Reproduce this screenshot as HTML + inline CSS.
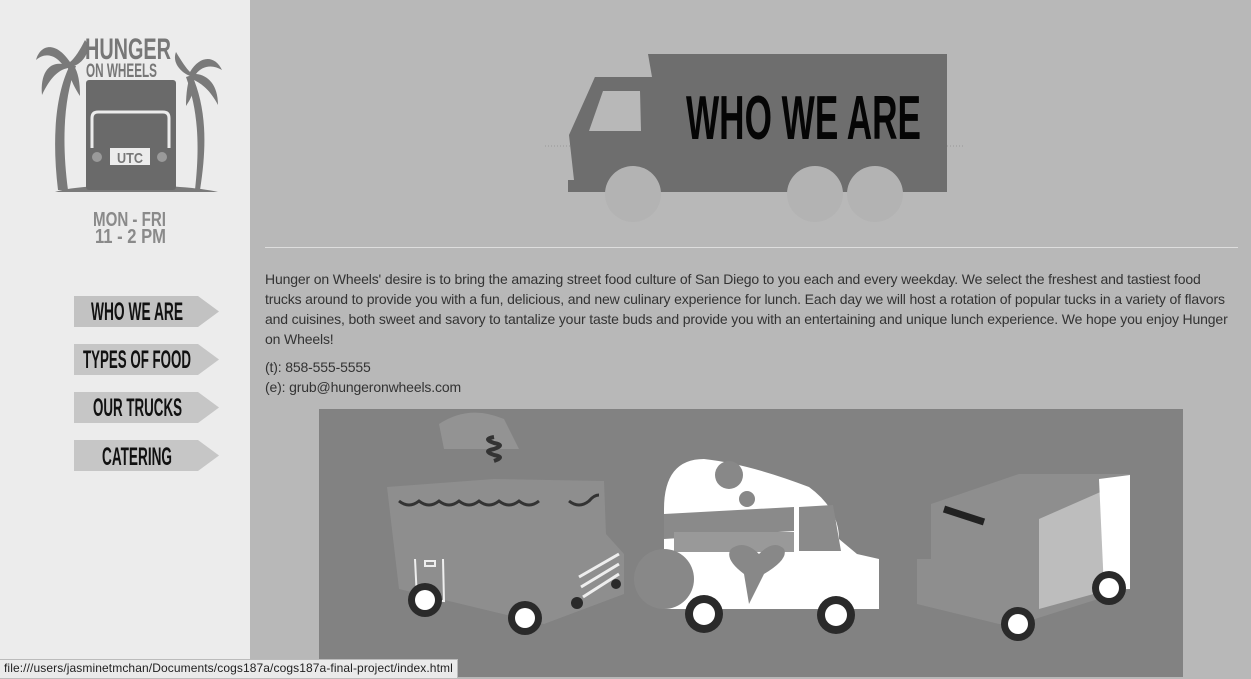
<!DOCTYPE html>
<html><head><meta charset="utf-8"><style>
body{margin:0;width:1251px;height:677px;overflow:hidden;background:#b8b8b8;font-family:"Liberation Sans",sans-serif;position:relative}
#side{position:absolute;left:0;top:0;width:250px;height:677px;background:#ececec}
#txt{position:absolute;left:265px;top:269px;width:985px;font-size:14px;line-height:20px;color:#333;letter-spacing:-0.15px;white-space:nowrap}
#txt p{margin:0 0 8px}
#hr{position:absolute;left:265px;top:247px;width:973px;height:1px;background:#ddd}
#status{position:absolute;left:0;top:659px;height:18px;padding:0 4px;background:#eaeaea;border:1px solid #bbb;border-left:none;font-size:12px;line-height:17px;color:#222;letter-spacing:0.1px}
</style></head><body>
<div id="side"></div>
<svg style="position:absolute;left:0;top:0" width="250" height="480" font-family="Liberation Sans,sans-serif" font-weight="bold">
 <g fill="#7a7a7a">
  <path d="M58 190 C52 140 55 95 70 65 L76 66 C63 100 62 145 68 190Z"/>
  <path d="M200 190 C208 140 205 105 192 75 L186 77 C198 110 200 145 195 190Z"/>
  <path d="M70 62 C55 40 40 45 36 60 C45 52 55 55 62 64 C50 62 40 72 42 95 C50 78 58 70 68 68 C70 80 76 90 80 96 C80 82 78 72 74 66 C85 62 92 48 85 40 C80 50 75 58 70 62Z"/>
  <path d="M190 72 C200 55 215 55 222 70 C212 64 202 66 196 74 C208 75 218 85 218 105 C210 90 202 84 194 80 C195 92 190 100 186 106 C186 92 188 82 190 76 C180 72 172 62 176 52 C182 62 186 68 190 72Z"/>
  <path d="M55 192 C80 183 180 183 218 192Z"/>
 </g>
 <rect x="86" y="80" width="90" height="110" rx="3" fill="#6a6a6a"/>
 <path d="M92 148 L92 118 Q92 112 98 112 L163 112 Q169 112 169 118 L169 148" fill="none" stroke="#ececec" stroke-width="3"/>
 <rect x="92" y="148" width="78" height="30" fill="#6a6a6a"/>
 <circle cx="97" cy="157" r="5" fill="#9a9a9a"/><circle cx="162" cy="157" r="5" fill="#9a9a9a"/>
 <rect x="110" y="148" width="40" height="17" fill="#ececec"/>
 <text x="117" y="163" font-size="15" fill="#777" textLength="26" lengthAdjust="spacingAndGlyphs">UTC</text>
 <text x="85" y="59" font-size="30" fill="#777" textLength="86" lengthAdjust="spacingAndGlyphs">HUNGER</text>
 <text x="86" y="77" font-size="19" fill="#777" textLength="71" lengthAdjust="spacingAndGlyphs">ON WHEELS</text>
 <text x="93" y="226" font-size="20" fill="#8a8a8a" textLength="73" lengthAdjust="spacingAndGlyphs">MON - FRI</text>
 <text x="95" y="243" font-size="20" fill="#8a8a8a" textLength="71" lengthAdjust="spacingAndGlyphs">11 - 2 PM</text>
 <g fill="#c6c6c6">
  <path d="M74 296H198L219 311.5L198 327H74Z" fill="#c2c2c2"/>
  <path d="M74 344H198L219 359.5L198 375H74Z"/>
  <path d="M74 392H198L219 407.5L198 423H74Z"/>
  <path d="M74 440H198L219 455.5L198 471H74Z"/>
 </g>
 <g fill="#111" font-size="25">
  <text x="91" y="320" textLength="92" lengthAdjust="spacingAndGlyphs">WHO WE ARE</text>
  <text x="83" y="368" textLength="108" lengthAdjust="spacingAndGlyphs">TYPES OF FOOD</text>
  <text x="93" y="416" textLength="89" lengthAdjust="spacingAndGlyphs">OUR TRUCKS</text>
  <text x="102" y="465" textLength="70" lengthAdjust="spacingAndGlyphs">CATERING</text>
 </g>
</svg>

<svg style="position:absolute;left:540px;top:40px" width="430" height="200">
 <line x1="5" y1="106" x2="425" y2="106" stroke="#999" stroke-dasharray="1 2"/>
 <path d="M122 14H407V152H28V140H34L29 95L55 37H112L108 14Z" fill="#6e6e6e"/>
 <path d="M30 95L55 37H112L120 108H108Z" fill="#6e6e6e"/>
 <path d="M49 91L63 51H100L101 91Z" fill="#b8b8b8"/>
 <circle cx="93" cy="154" r="28" fill="#b3b3b3"/>
 <circle cx="275" cy="154" r="28" fill="#b3b3b3"/>
 <circle cx="335" cy="154" r="28" fill="#b3b3b3"/>
 <text x="146" y="99" font-family="Liberation Sans,sans-serif" font-weight="bold" font-size="62" fill="#050505" textLength="235" lengthAdjust="spacingAndGlyphs">WHO WE ARE</text>
</svg>
<div id="hr"></div>
<div id="txt"><p>Hunger on Wheels' desire is to bring the amazing street food culture of San Diego to you each and every weekday. We select the freshest and tastiest food<br>trucks around to provide you with a fun, delicious, and new culinary experience for lunch. Each day we will host a rotation of popular tucks in a variety of flavors<br>and cuisines, both sweet and savory to tantalize your taste buds and provide you with an entertaining and unique lunch experience. We hope you enjoy Hunger<br>on Wheels!</p>
<div>(t): 858-555-5555</div><div>(e): grub@hungeronwheels.com</div></div>

<svg style="position:absolute;left:319px;top:409px" width="864" height="268">
 <rect width="864" height="268" fill="#828282"/>
 <path d="M120 15 Q150 -5 185 10 L200 40 L125 40Z" fill="#939393"/>
 <path d="M175 52 q12 -4 0 -6 q-12 -4 0 -6 q12 -4 0 -6 q-12 -4 0 -6" stroke="#333" stroke-width="4" fill="none"/>
 <path d="M68 78 L175 70 L285 72 L287 125 L305 145 L305 185 L225 215 L80 180Z" fill="#8e8e8e"/>
 <path d="M80 92 q10 8 20 0 q10 8 20 0 q10 8 20 0 q10 8 20 0 q10 8 20 0 q10 8 20 0 q10 8 20 0 M250 92 q10 8 20 0 q5 -6 10 -6" stroke="#333" stroke-width="3" fill="none"/>
 <path d="M96 150 L98 190 L125 192 L124 150 M106 152h10v5h-10z" stroke="#eee" stroke-width="2" fill="none"/>
 <path d="M260 168 L300 145 M262 178 L300 155 M264 188 L300 165" stroke="#eee" stroke-width="3"/>
 <circle cx="106" cy="191" r="17" fill="#2a2a2a"/><circle cx="106" cy="191" r="10" fill="#fff"/>
 <circle cx="206" cy="209" r="17" fill="#2a2a2a"/><circle cx="206" cy="209" r="10" fill="#fff"/>
 <circle cx="297" cy="175" r="5" fill="#2a2a2a"/><circle cx="258" cy="194" r="6" fill="#2a2a2a"/>
 <path d="M345 200 L345 100 Q345 50 385 50 Q430 55 490 78 Q520 100 520 130 L538 145 L560 150 L560 200Z" fill="#fff"/>
 <circle cx="410" cy="66" r="14" fill="#888"/><circle cx="428" cy="90" r="8" fill="#888"/>
 <path d="M345 105 L475 98 L475 122 L345 130Z" fill="#8a8a8a"/>
 <rect x="355" y="123" width="120" height="20" fill="#999"/>
 <path d="M480 98 L514 96 L522 142 L480 142Z" fill="#8a8a8a"/>
 <path d="M430 195 L445 165 Q470 150 465 140 Q455 130 440 145 Q425 130 412 140 Q405 150 425 165Z" fill="#888"/>
 <circle cx="345" cy="170" r="30" fill="#888"/>
 <circle cx="385" cy="205" r="19" fill="#2a2a2a"/><circle cx="385" cy="205" r="11" fill="#fff"/>
 <circle cx="517" cy="206" r="19" fill="#2a2a2a"/><circle cx="517" cy="206" r="11" fill="#fff"/>
 <path d="M612 95 L700 65 L811 65 L811 180 L700 215 L680 215 L598 195 L598 150 L612 150Z" fill="#8e8e8e"/>
 <path d="M720 110 L811 70 L811 175 L720 200Z" fill="#bdbdbd"/>
 <path d="M780 70 L811 66 L811 180 L785 180Z" fill="#fff"/>
 <path d="M625 100 L665 113" stroke="#222" stroke-width="7"/>
 <circle cx="790" cy="179" r="17" fill="#2a2a2a"/><circle cx="790" cy="179" r="10" fill="#fff"/>
 <circle cx="699" cy="215" r="17" fill="#2a2a2a"/><circle cx="699" cy="215" r="10" fill="#fff"/>
</svg>
<div id="status">file:///users/jasminetmchan/Documents/cogs187a/cogs187a-final-project/index.html</div>
</body></html>
